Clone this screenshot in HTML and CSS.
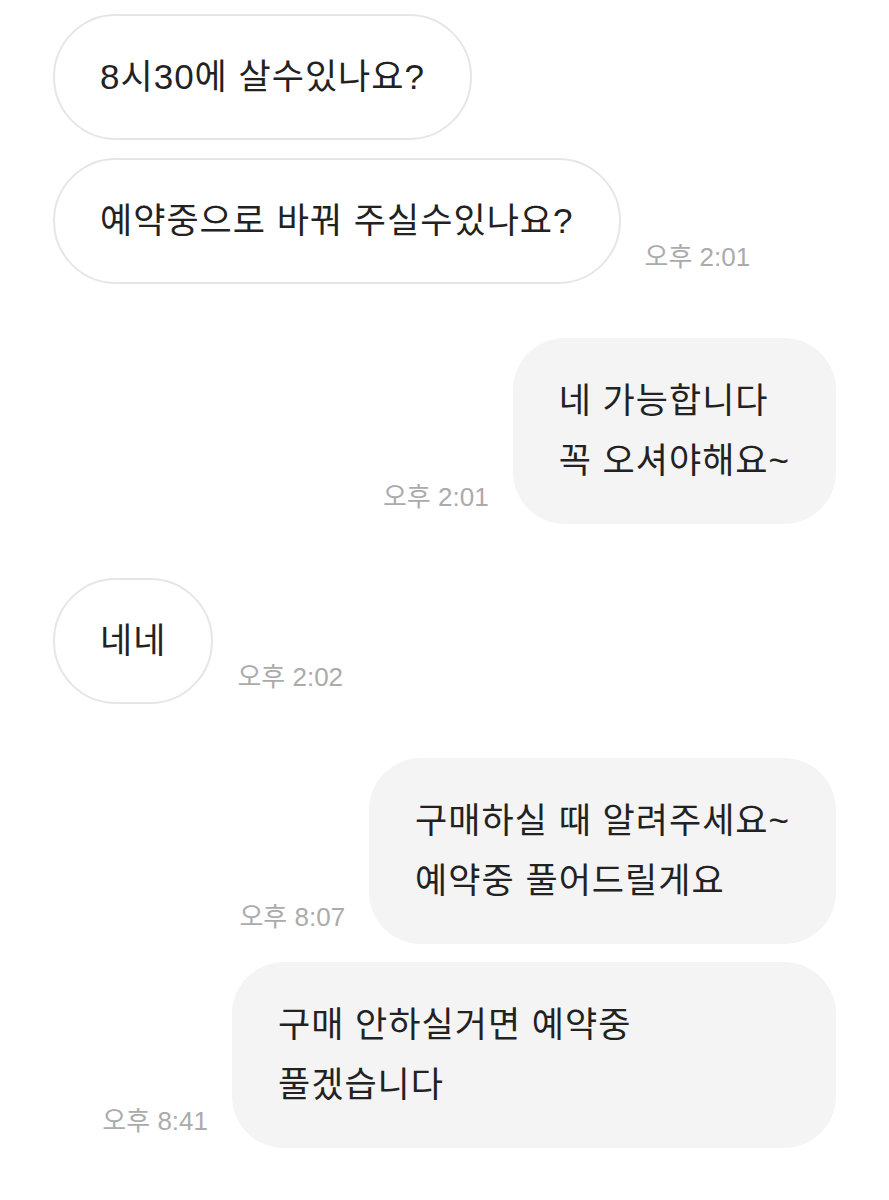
FILE: index.html
```html
<!DOCTYPE html>
<html lang="ko">
  <head>
    <meta charset="UTF-8" />
    <meta name="viewport" content="width=device-width, initial-scale=1.0" />
    <link rel="stylesheet" href="styles.css">
    <title>채팅</title>
  </head>
  <body>
    <div class="chat">
      <div class="row other">
        <div class="bubble">8시30에 살수있나요?</div>
      </div>
      <div class="row other same">
        <div class="bubble">예약중으로 바꿔 주실수있나요?</div>
        <span class="time">오후 2:01</span>
      </div>

      <div class="row me">
        <span class="time">오후 2:01</span>
        <div class="bubble">네 가능합니다<br />꼭 오셔야해요~</div>
      </div>

      <div class="row other">
        <div class="bubble">네네</div>
        <span class="time">오후 2:02</span>
      </div>

      <div class="row me">
        <span class="time">오후 8:07</span>
        <div class="bubble">구매하실 때 알려주세요~<br />예약중 풀어드릴게요</div>
      </div>
      <div class="row me same">
        <span class="time">오후 8:41</span>
        <div class="bubble">구매 안하실거면 예약중 풀겠습니다</div>
      </div>
    </div>
  </body>
</html>
```

FILE: styles.css
```css
* {
  margin: 0;
  padding: 0;
  box-sizing: border-box;
}

body {
  background: #fff;
  font-family: "Liberation Sans", "Noto Sans CJK KR", sans-serif;
  color: #222;
}

.chat {
  display: flex;
  flex-direction: column;
  padding: 14px 53px;
}

.row {
  display: flex;
  align-items: flex-end;
  gap: 24px;
  margin-top: 54px;
}

.row:first-child {
  margin-top: 0;
}

.row.same {
  margin-top: 18px;
}

.row.me {
  justify-content: flex-end;
}

.bubble {
  max-width: 604px;
  font-size: 35px;
  letter-spacing: 1px;
  line-height: 60px;
  padding: 33px 46px;
  border-radius: 52px;
  word-break: keep-all;
}

.other .bubble {
  border: 2px solid #e6e6e6;
  padding: 31px 45px;
  border-radius: 64px;
}

.me .bubble {
  background: #f4f4f4;
}

.time {
  font-size: 26px;
  line-height: 30px;
  color: #ababab;
  padding-bottom: 12px;
  white-space: nowrap;
}
```
